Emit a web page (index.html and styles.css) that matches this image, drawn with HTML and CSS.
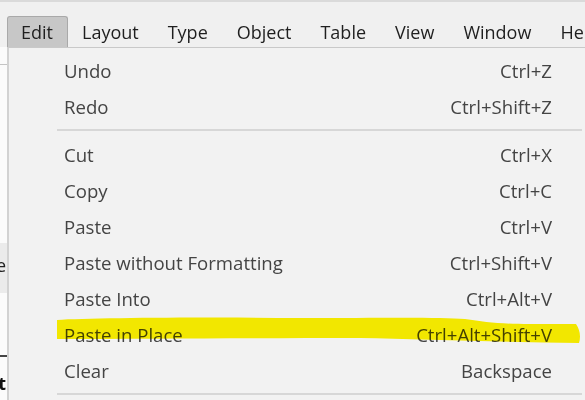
FILE: index.html
```
<!DOCTYPE html>
<html>
<head>
<meta charset="utf-8">
<link rel="stylesheet" href="styles.css">
</head>
<body>
<div class="page">
  <div class="menubar">
    <div class="mb-item active">Edit</div>
    <div class="mb-item">Layout</div>
    <div class="mb-item">Type</div>
    <div class="mb-item">Object</div>
    <div class="mb-item">Table</div>
    <div class="mb-item">View</div>
    <div class="mb-item">Window</div>
    <div class="mb-item">Help</div>
  </div>
  <div class="main">
    <div class="strip">
      <div class="s-top"></div>
      <div class="s-gap1"></div>
      <div class="s-panel"><span class="s-txt">Te</span></div>
      <div class="s-gap2"></div>
      <div class="s-bold"><span class="s-txt b">Ct</span></div>
    </div>
    <div class="menu">
      <div class="row"><span class="lbl">Undo</span><span class="key">Ctrl+Z</span></div>
      <div class="row"><span class="lbl">Redo</span><span class="key">Ctrl+Shift+Z</span></div>
      <div class="sep"></div>
      <div class="row"><span class="lbl">Cut</span><span class="key">Ctrl+X</span></div>
      <div class="row"><span class="lbl">Copy</span><span class="key">Ctrl+C</span></div>
      <div class="row"><span class="lbl">Paste</span><span class="key">Ctrl+V</span></div>
      <div class="row"><span class="lbl">Paste without Formatting</span><span class="key">Ctrl+Shift+V</span></div>
      <div class="row"><span class="lbl">Paste Into</span><span class="key">Ctrl+Alt+V</span></div>
      <div class="row"><span class="lbl">Paste in Place</span><span class="key">Ctrl+Alt+Shift+V</span></div>
      <div class="row"><span class="lbl">Clear</span><span class="key">Backspace</span></div>
      <div class="sep"></div>
    </div>
  </div>
  <svg class="hl" width="585" height="400" viewBox="0 0 585 400">
    <path d="M57,320 C90,318 200,317 300,318 C380,318 440,317 465,319 C485,322 500,324 530,324 L576,324 Q582,333 579,343 C500,342 420,339 360,338 C250,338 150,339 57,339 Z" fill="#fff400"/>
  </svg>
</div>
</body>
</html>
```
FILE: styles.css
```
html, body {
  margin: 0;
  padding: 0;
}
body {
  font-family: "Open Sans", "Noto Sans", sans-serif;
}
.page {
  position: relative;
  width: 585px;
  height: 400px;
  overflow: hidden;
  background: #f0f0f0;
  border-top: 2px solid #dadada;
  box-sizing: border-box;
}
.menubar {
  display: flex;
  align-items: flex-end;
  height: 45px;
  padding-left: 7px;
  white-space: nowrap;
}
.mb-item {
  height: 31px;
  line-height: 30px;
  padding: 0 14px 0 13px;
  font-size: 18px;
  color: #1f1f1f;
  box-sizing: border-box;
  border: 1px solid transparent;
  border-bottom: none;
  flex: none;
}
.mb-item.active {
  background: #c7c7c7;
  border-color: #a9a9a9;
  border-radius: 3px 3px 0 0;
}
.main {
  display: flex;
  height: 353px;
}
.strip {
  width: 7px;
  flex: none;
  background: #fbfbfb;
  display: flex;
  flex-direction: column;
  overflow: hidden;
}
.s-top {
  height: 17px;
  border-bottom: 1px solid #c4c4c4;
  flex: none;
}
.s-gap1 {
  height: 178px;
  flex: none;
}
.s-panel {
  height: 50px;
  background: #ebebeb;
  flex: none;
  position: relative;
}
.s-gap2 {
  height: 62px;
  flex: none;
  border-bottom: 2px solid #444;
}
.s-bold {
  flex: 1;
  position: relative;
}
.s-txt {
  position: absolute;
  right: 1px;
  top: 12px;
  font-size: 18px;
  color: #222;
  line-height: 20px;
}
.s-txt.b {
  font-weight: 700;
  top: 16px;
  color: #111;
}
.menu {
  flex: 1;
  background: #f2f2f2;
  border-top: 1px solid #c9c9c9;
  border-left: 2px solid #d2d2d2;
  padding-top: 4px;
  box-sizing: border-box;
}
.row {
  display: flex;
  justify-content: space-between;
  align-items: center;
  height: 36px;
  padding-left: 55px;
  padding-right: 33px;
  font-size: 18.6px;
  color: #444;
  white-space: nowrap;
}
.sep {
  height: 12px;
  margin-left: 48px;
  margin-right: 3px;
  position: relative;
}
.sep::after {
  content: "";
  position: absolute;
  left: 0;
  right: 0;
  top: 5px;
  height: 2px;
  background: #d7d7d7;
}
.hl {
  position: absolute;
  left: 0;
  top: -2px;
  mix-blend-mode: multiply;
  pointer-events: none;
}
```
